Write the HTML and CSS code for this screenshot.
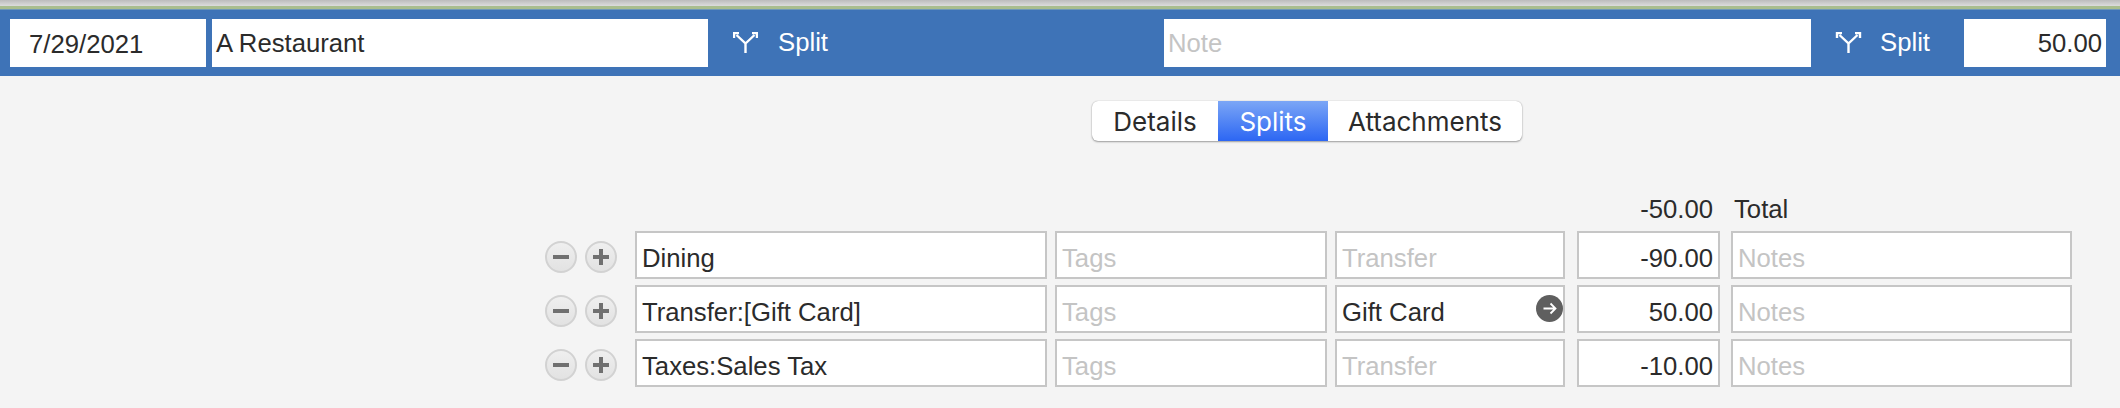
FILE: index.html
```html
<!DOCTYPE html>
<html lang="en">
<head>
  <meta charset="UTF-8" />
  <title>Splits</title>
  <link rel="stylesheet" href="styles.css">
</head>
<body>

  <div class="top-strip"></div>

  <div class="entry-bar">
    <div class="bar-field date-field">7/29/2021</div>
    <div class="bar-field payee-field">A Restaurant</div>
    <div class="split-label category-split">
      <svg class="split-icon" viewBox="0 0 25 21"><path d="M12.5 21V11.5L3.5 3M12.5 11.5L21.5 3M1 6V1H6M24 6V1H19" /></svg>
      <span>Split</span>
    </div>
    <div class="bar-field note-field placeholder">Note</div>
    <div class="split-label note-split">
      <svg class="split-icon" viewBox="0 0 25 21"><path d="M12.5 21V11.5L3.5 3M12.5 11.5L21.5 3M1 6V1H6M24 6V1H19" /></svg>
      <span>Split</span>
    </div>
    <div class="bar-field amount-field">50.00</div>
  </div>

  <div class="tabs">
    <div class="tab tab-details">Details</div>
    <div class="tab tab-splits">Splits</div>
    <div class="tab tab-attachments">Attachments</div>
  </div>

  <div class="splits">
    <div class="totals-row">
      <div class="total-amount">-50.00</div>
      <div class="total-label">Total</div>
    </div>

    <div class="split-row">
      <div class="row-buttons">
        <div class="round-btn"><svg viewBox="0 0 28 28"><path d="M6 14H22" /></svg></div>
        <div class="round-btn"><svg viewBox="0 0 28 28"><path d="M6 14H22M14 6V22" /></svg></div>
      </div>
      <div class="field col-category">Dining</div>
      <div class="field col-tags placeholder">Tags</div>
      <div class="field col-transfer placeholder">Transfer</div>
      <div class="field col-amount">-90.00</div>
      <div class="field col-notes placeholder">Notes</div>
    </div>

    <div class="split-row">
      <div class="row-buttons">
        <div class="round-btn"><svg viewBox="0 0 28 28"><path d="M6 14H22" /></svg></div>
        <div class="round-btn"><svg viewBox="0 0 28 28"><path d="M6 14H22M14 6V22" /></svg></div>
      </div>
      <div class="field col-category">Transfer:[Gift Card]</div>
      <div class="field col-tags placeholder">Tags</div>
      <div class="field col-transfer">
        Gift Card
        <svg class="go-icon" viewBox="0 0 27 27"><circle cx="13.5" cy="13.5" r="13.5" /><path d="M7.5 13.5H19M14.5 8.5L19.5 13.5L14.5 18.5" /></svg>
      </div>
      <div class="field col-amount">50.00</div>
      <div class="field col-notes placeholder">Notes</div>
    </div>

    <div class="split-row">
      <div class="row-buttons">
        <div class="round-btn"><svg viewBox="0 0 28 28"><path d="M6 14H22" /></svg></div>
        <div class="round-btn"><svg viewBox="0 0 28 28"><path d="M6 14H22M14 6V22" /></svg></div>
      </div>
      <div class="field col-category">Taxes:Sales Tax</div>
      <div class="field col-tags placeholder">Tags</div>
      <div class="field col-transfer placeholder">Transfer</div>
      <div class="field col-amount">-10.00</div>
      <div class="field col-notes placeholder">Notes</div>
    </div>
  </div>

</body>
</html>
```

FILE: styles.css
```css
body {
  font-family: "Liberation Sans", Arial, sans-serif;
  font-size: 25.7px;
  margin: 0;
  padding: 0;
  height: 408px;
  overflow: hidden;
  background-color: #f4f4f4;
  color: #2b2b2b;
}

.top-strip {
  height: 10px;
  box-sizing: border-box;
  background: linear-gradient(to bottom, #bcbcbc 0, #dcdcdc 6px, #a9bd8e 6px, #a9bd8e 9px, #6f97b8 9px);
}

.entry-bar {
  display: flex;
  align-items: center;
  height: 66px;
  background-color: #3e73b7;
}

.bar-field {
  box-sizing: border-box;
  height: 48px;
  line-height: 48px;
  background-color: #ffffff;
  white-space: nowrap;
}

.date-field {
  width: 196px;
  margin-left: 10px;
  padding-left: 19px;
  line-height: 50px;
}

.payee-field {
  width: 496px;
  margin-left: 6px;
  padding-left: 4px;
}

.note-field {
  width: 647px;
  padding-left: 4px;
}

.amount-field {
  width: 142px;
  margin-left: 24px;
  padding-right: 4px;
  text-align: right;
}

.split-label {
  display: flex;
  align-items: center;
  color: #ffffff;
}

.category-split {
  width: 431px;
  margin-left: 25px;
  padding-bottom: 2px;
}

.note-split {
  width: 105px;
  margin-left: 24px;
  padding-bottom: 2px;
}

.split-label span {
  margin-left: 20px;
}

.split-icon {
  width: 25px;
  height: 21px;
  flex-shrink: 0;
  fill: none;
  stroke: #ffffff;
  stroke-width: 2.4;
}

.note-split .split-icon {
  width: 27px;
}

.note-split span {
  margin-left: 18px;
}

.tabs {
  display: flex;
  box-sizing: border-box;
  width: 430px;
  height: 40px;
  margin: 25px 0 0 1092px;
  background-color: #ffffff;
  border-radius: 6px;
  box-shadow: 0 1px 2px rgba(0, 0, 0, 0.35), 0 0 1px rgba(0, 0, 0, 0.3);
  overflow: hidden;
  font-family: Inter, "Liberation Sans", sans-serif;
  font-size: 26px;
}

.tab {
  line-height: 41px;
  text-align: center;
}

.tab-details {
  width: 126px;
}

.tab-splits {
  width: 110px;
  color: #ffffff;
  background: linear-gradient(to bottom, #7ba6f6, #2c66f3);
}

.tab-attachments {
  width: 194px;
}

.splits {
  margin-left: 545px;
}

.totals-row {
  display: flex;
  height: 36px;
  margin-top: 54px;
  line-height: 28px;
}

.total-amount {
  width: 1168px;
  text-align: right;
}

.total-label {
  margin-left: 21px;
}

.split-row {
  display: flex;
  height: 48px;
  margin-bottom: 6px;
}

.row-buttons {
  display: flex;
  align-items: center;
  gap: 8px;
  width: 90px;
  padding-top: 3px;
  box-sizing: border-box;
}

.round-btn {
  box-sizing: border-box;
  width: 32px;
  height: 32px;
  border: 2px solid #d2d2d2;
  border-radius: 50%;
  background: linear-gradient(to bottom, #efefef, #e2e2e2);
}

.round-btn svg {
  display: block;
  width: 28px;
  height: 28px;
  fill: none;
  stroke: #707070;
  stroke-width: 4;
}

.field {
  position: relative;
  box-sizing: border-box;
  height: 48px;
  line-height: 51px;
  padding: 0 5px;
  border: 2px solid #c6c6c6;
  background-color: #ffffff;
  white-space: nowrap;
}

.col-category {
  width: 412px;
}

.col-tags {
  width: 272px;
  margin-left: 8px;
}

.col-transfer {
  width: 230px;
  margin-left: 8px;
}

.col-amount {
  width: 143px;
  margin-left: 12px;
  text-align: right;
}

.col-notes {
  width: 341px;
  margin-left: 11px;
}

.placeholder {
  color: #c4c4c4;
}

.go-icon {
  position: absolute;
  top: 8px;
  right: 0;
  width: 27px;
  height: 27px;
}

.go-icon circle {
  fill: #5f5f5f;
}

.go-icon path {
  fill: none;
  stroke: #ffffff;
  stroke-width: 1.8;
}
```
